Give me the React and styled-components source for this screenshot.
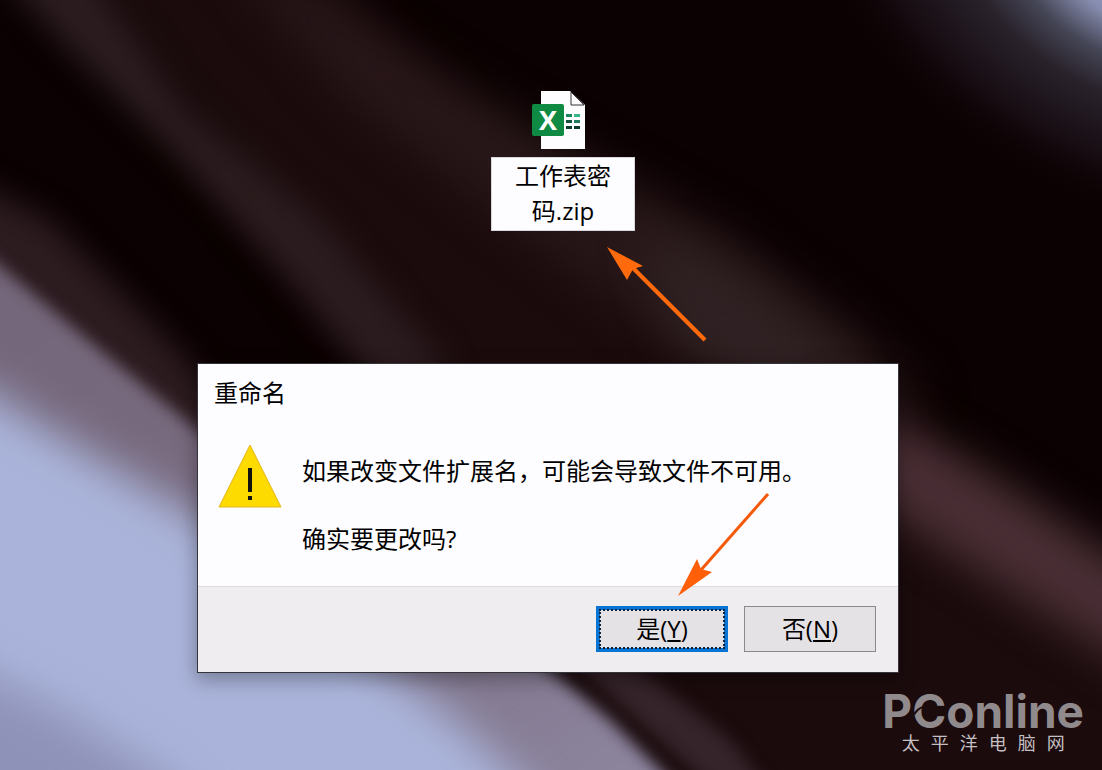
import React, { useState } from 'react';
import styled, { createGlobalStyle } from 'styled-components';

const GlobalStyle = createGlobalStyle`
    * {
        box-sizing: border-box;
    }

    body {
        margin: 0;
        background-color: #0b0102;
        font-family: "Open Sans", "Noto Sans CJK SC", sans-serif;
        color: #000;
    }
`;

const Desktop = styled.main`
    position: relative;
    min-height: 100vh;
    overflow: hidden;
`;

const WallpaperSvg = styled.svg`
    position: absolute;
    inset: 0;
    width: 100%;
    height: 100%;
`;

const FileItem = styled.div`
    position: absolute;
    top: 91px;
    left: calc(50% - 60px);
    width: 144px;
    display: flex;
    flex-direction: column;
    align-items: center;
    gap: 8px;
`;

const FileIcon = styled.svg`
    width: 62px;
    height: 58px;
`;

const FileName = styled.textarea`
    display: block;
    width: 100%;
    height: 74px;
    padding: 0 16px;
    border: 1px solid #d8d8dc;
    border-radius: 0;
    background-color: #fdfcff;
    color: #000;
    font: inherit;
    font-size: 24px;
    line-height: 35px;
    text-align: center;
    resize: none;
    overflow: hidden;
    outline: none;
`;

const Dialog = styled.section`
    position: absolute;
    top: 364px;
    left: calc(50% - 353px);
    width: 700px;
    max-width: 100%;
    background-color: #fdfcff;
    box-shadow: 0 0 0 1px #35343a, 0 6px 18px 2px rgba(0, 0, 0, 0.3);
`;

const DialogTitle = styled.h1`
    margin: 0;
    padding: 12px 16px;
    font-size: 24px;
    font-weight: normal;
    line-height: 34px;
`;

const DialogBody = styled.div`
    display: flex;
    gap: 20px;
    padding: 22px 20px 30px;
`;

const WarningIcon = styled.svg`
    flex: none;
    width: 64px;
    height: 64px;
`;

const Message = styled.div`
    display: flex;
    flex-direction: column;
    gap: 34px;
    padding-top: 10px;
`;

const Line = styled.p`
    margin: 0;
    font-size: 24px;
    line-height: 34px;
`;

const DialogFooter = styled.footer`
    display: flex;
    justify-content: flex-end;
    gap: 16px;
    padding: 19px 22px 20px;
    border-top: 1px solid #dcdbe0;
    background-color: #efedf0;
`;

const DialogButton = styled.button`
    width: 132px;
    height: 46px;
    padding: 0;
    border: ${props => props.$primary ? '4px solid #0a74d4' : '1px solid #8a898c'};
    border-radius: 0;
    background-color: #e4e2e4;
    color: #000;
    font: inherit;
    font-size: 24px;
    line-height: 34px;
    outline: ${props => props.$primary ? '2px dotted #10233c' : 'none'};
    outline-offset: -5px;
`;

const Arrow = styled.svg`
    position: absolute;
    top: ${props => props.$top}px;
    left: ${props => props.$left}px;
    pointer-events: none;
`;

const Watermark = styled.div`
    position: absolute;
    right: 18px;
    bottom: 16px;
    display: flex;
    flex-direction: column;
    align-items: center;
    color: #918a8d;
`;

const Brand = styled.span`
    position: relative;
    font-family: Inter, "Liberation Sans", sans-serif;
    font-size: 46px;
    font-weight: 700;
    line-height: 46px;
`;

const Swoosh = styled.svg`
    position: absolute;
    top: 12px;
    left: 30px;
    width: 22px;
    height: 20px;
`;

const BrandName = styled.span`
    display: flex;
    gap: 11px;
    color: #c4bfc1;
    font-family: "Liberation Sans", "Noto Sans CJK SC", sans-serif;
    font-size: 18px;
    line-height: 20px;
`;

const Wallpaper = () => (
    <WallpaperSvg viewBox="0 0 1102 770" preserveAspectRatio="none" aria-hidden="true">
        <defs>
            <filter id="haze" x="-20%" y="-20%" width="140%" height="140%" colorInterpolationFilters="sRGB">
                <feGaussianBlur stdDeviation="22" />
            </filter>
            <filter id="soft" x="-20%" y="-20%" width="140%" height="140%" colorInterpolationFilters="sRGB">
                <feGaussianBlur stdDeviation="15" />
            </filter>
            <filter id="edge" x="-20%" y="-20%" width="140%" height="140%" colorInterpolationFilters="sRGB">
                <feGaussianBlur stdDeviation="8" />
            </filter>
            <radialGradient id="glow" gradientUnits="userSpaceOnUse" cx="0" cy="0" r="1" gradientTransform="translate(1125 -25) rotate(30) scale(370 230)">
                <stop offset="0" stopColor="#a3aad4" />
                <stop offset="0.18" stopColor="#868cae" />
                <stop offset="0.34" stopColor="#454656" />
                <stop offset="0.5" stopColor="#29222b" />
                <stop offset="0.75" stopColor="#170d13" />
                <stop offset="1" stopColor="#0b0102" stopOpacity="0" />
            </radialGradient>
            <linearGradient id="mauve" x1="0" y1="0" x2="1" y2="1">
                <stop offset="0" stopColor="#736579" />
                <stop offset="0.5" stopColor="#7a6c80" />
                <stop offset="1" stopColor="#9089a4" />
            </linearGradient>
        </defs>
        <rect width="1102" height="770" fill="#0b0102" />
        <path d="M60 -60 L300 -60 L500 170 L820 370 L1180 700 L1180 850 L640 850 L390 400 Z" fill="#1b0b0d" filter="url(#haze)" />
        <path d="M220 -50 L300 -20 L420 60 L570 150 L720 230 L850 325 L930 400 L800 420 L640 320 L480 200 L350 100 Z" fill="#281719" filter="url(#haze)" />
        <path d="M640 230 L740 280 L860 380 L780 400 L680 340 Z" fill="#302224" filter="url(#haze)" />
        <path d="M-20 -50 L90 -30 L190 110 L320 220 L450 370 L400 410 L290 280 L170 150 L60 40 Z" fill="#2b1c1f" filter="url(#soft)" />
        <path d="M830 390 L900 420 L1000 480 L1150 580 L1150 680 L1040 610 L870 500 Z" fill="#4a2f35" filter="url(#haze)" />
        <path d="M-50 170 L50 220 L140 310 L270 450 L-50 450 Z" fill="#2c1b1f" filter="url(#soft)" />
        <path d="M560 650 L640 670 L730 740 L800 830 L760 830 L660 740 Z" fill="#35242a" filter="url(#edge)" />
        <path d="M-60 215 L0 266 L100 350 L200 432 L420 580 L550 670 L610 720 L690 800 L-60 830 Z" fill="url(#mauve)" filter="url(#edge)" />
        <path d="M-60 360 L0 400 L100 460 L200 518 L390 670 L450 715 L570 830 L-60 850 Z" fill="#aab4da" filter="url(#haze)" />
        <path d="M-60 650 L60 710 L200 800 L-60 850 Z" fill="#8f92b8" filter="url(#haze)" />
        <rect x="700" width="402" height="350" fill="url(#glow)" />
    </WallpaperSvg>
);

const ExcelIcon = () => (
    <FileIcon viewBox="9 0 62 58" aria-hidden="true">
        <path d="M18 0 H47 L62 14 V58 H18 Z" fill="#fdfcff" />
        <path d="M48 1 V14 H61 Z" fill="#fdfcff" stroke="#333" strokeWidth="1" />
        <g fill="#0c3b2c">
            <rect x="43" y="23" width="6" height="3" fill="#17885a" />
            <rect x="51" y="23" width="6" height="3" fill="#38b587" />
            <rect x="43" y="29" width="6" height="3" fill="#14503f" />
            <rect x="51" y="29" width="6" height="3" fill="#207a5c" />
            <rect x="43" y="35" width="6" height="3" />
            <rect x="51" y="35" width="6" height="3" />
        </g>
        <rect x="9" y="13" width="32" height="32" rx="2" fill="#0f8a43" />
        <text x="25" y="39" textAnchor="middle" fontFamily="Open Sans" fontSize="27" fontWeight="700" fill="#fff">X</text>
    </FileIcon>
);

const App = () => {
    const [name, setName] = useState('工作表密码.zip');

    return (
        <Desktop>
            <GlobalStyle />
            <Wallpaper />
            <FileItem>
                <ExcelIcon />
                <FileName
                    aria-label="文件名"
                    spellCheck={false}
                    value={name}
                    onChange={e => setName(e.target.value)}
                />
                <Arrow $top={154} $left={114} width="104" height="100" aria-hidden="true">
                    <path d="M27 22 L100 95" stroke="#ff6a0c" strokeWidth="4" />
                    <path d="M2 2 L38 21 L28 24 L22 35 Z" fill="#ff6a0c" />
                </Arrow>
            </FileItem>
            <Dialog role="alertdialog" aria-labelledby="dialog-title">
                <DialogTitle id="dialog-title">重命名</DialogTitle>
                <DialogBody>
                    <WarningIcon viewBox="0 0 64 64" aria-hidden="true">
                        <path d="M32 1 L63 63 H1 Z" fill="#fddb00" stroke="#e3b51c" strokeWidth="1" />
                        <rect x="30" y="24" width="4" height="24" fill="#111" />
                        <rect x="30" y="52" width="4" height="4" fill="#111" />
                    </WarningIcon>
                    <Message>
                        <Line>如果改变文件扩展名，可能会导致文件不可用。</Line>
                        <Line>确实要更改吗?</Line>
                    </Message>
                </DialogBody>
                <DialogFooter>
                    <DialogButton type="button" $primary>是(<u>Y</u>)</DialogButton>
                    <DialogButton type="button">否(<u>N</u>)</DialogButton>
                </DialogFooter>
                <Arrow $top={126} $left={476} width="100" height="110" aria-hidden="true">
                    <path d="M27 80 L94 4" stroke="#f4590a" strokeWidth="3" />
                    <path d="M4 106 L23 69 L27 79 L38 82 Z" fill="#ff5f08" />
                </Arrow>
            </Dialog>
            <Watermark>
                <Brand>
                    PConline
                    <Swoosh viewBox="0 0 22 20" aria-hidden="true">
                        <path d="M1 14 C5 8 10 5 18 5 C12 6 7 9 3 15 Z" fill="#1d0b0d" />
                    </Swoosh>
                </Brand>
                <BrandName>
                    {'太平洋电脑网'.split('').map(char => <span key={char}>{char}</span>)}
                </BrandName>
            </Watermark>
        </Desktop>
    );
};

export default App;
